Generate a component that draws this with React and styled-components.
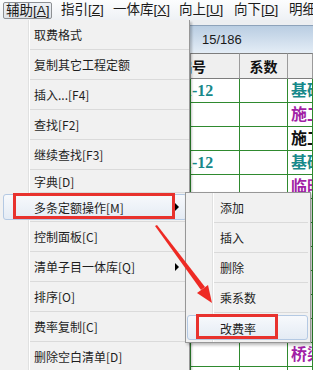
import React from "react";
import styled, { createGlobalStyle, css } from "styled-components";

const GlobalStyle = createGlobalStyle`
  html, body {
    margin: 0;
    padding: 0;
    background: #ffffff;
  }
  body {
    font-family: "Noto Sans CJK SC", "Noto Sans", sans-serif;
  }
`;

const TEAL = "#17898a";
const MAGENTA = "#a21fa6";
const INK = "#111111";
const GRID = "#2f8a2f";

const barItems = [
  { name: "辅助", key: "A", w: 49, open: true },
  { name: "指引", key: "Z", w: 52 },
  { name: "一体库", key: "X", w: 66 },
  { name: "向上", key: "U", w: 55 },
  { name: "向下", key: "D", w: 55 },
  { name: "明细", w: 60 },
];

const mainItems = [
  { label: "取费格式" },
  { label: "复制其它工程定额" },
  { label: "插入...[F4]" },
  { label: "查找[F2]" },
  { label: "继续查找[F3]" },
  { label: "字典[D]", h: 23 },
  { label: "多条定额操作[M]", h: 29, sub: true, active: true, marked: true },
  { label: "控制面板[C]" },
  { label: "清单子目一体库[Q]", sub: true },
  { label: "排序[O]" },
  { label: "费率复制[C]" },
  { label: "删除空白清单[D]" },
];

const subItems = [
  { label: "添加" },
  { label: "插入" },
  { label: "删除" },
  { label: "乘系数" },
  { label: "改费率", active: true, marked: true },
];

const rows = [
  { code: "1-12", codeColor: TEAL, name: "基础垫层", nameColor: TEAL },
  { name: "施工排水", nameColor: MAGENTA },
  { name: "施工降水", nameColor: INK },
  { code: "1-12", codeColor: TEAL, name: "基础", nameColor: TEAL },
  { name: "临时设施", nameColor: MAGENTA },
  {},
  {},
  {},
  {},
  {},
  {},
  { name: "桥梁工程", nameColor: MAGENTA },
  {},
];

const App = () => {
  return (
    <>
      <GlobalStyle />
      <Screen>
        <MenuBar>
          {barItems.map((b) => (
            <BarItem key={b.name} $w={b.w} $open={b.open}>
              {b.name}
              {b.key && (
                <>
                  [<Key>{b.key}</Key>]
                </>
              )}
            </BarItem>
          ))}
        </MenuBar>

        <TopStrip />
        <InfoBar>15/186</InfoBar>

        <Grid>
          <HeadCell />
          <HeadCell $indent={-13}>编号</HeadCell>
          <HeadCell $center>系数</HeadCell>
          <HeadCell />
          {rows.map((r, i) => (
            <React.Fragment key={i}>
              <Cell />
              <Cell $color={r.codeColor} $indent={-7}>
                {r.code}
              </Cell>
              <Cell />
              <Cell $color={r.nameColor} $indent={3}>
                {r.name}
              </Cell>
            </React.Fragment>
          ))}
        </Grid>

        <DropMenu>
          {mainItems.map((it) => (
            <MenuItem key={it.label} $h={it.h} $active={it.active}>
              <ItemText>{it.label}</ItemText>
              {it.sub && <SubArrow />}
              {it.marked && <RedFrame $left={-17} $top={0} $width={162} $height={26} />}
            </MenuItem>
          ))}
        </DropMenu>

        <SubMenu>
          {subItems.map((it) => (
            <SubItem key={it.label} $active={it.active}>
              <ItemText>{it.label}</ItemText>
              {it.marked && <RedFrame $left={-18} $top={1} $width={82} $height={25} />}
            </SubItem>
          ))}
        </SubMenu>

        <Pointer viewBox="0 0 313 370" width="313" height="370">
          <polygon points="155,226 157,225 205,287 201,290" fill="#ee2a24" />
          <polygon points="212,303 197,293 208,285" fill="#ee2a24" />
        </Pointer>
      </Screen>
    </>
  );
};

export default App;

const Screen = styled.div`
  position: relative;
  width: 313px;
  height: 370px;
  overflow: hidden;
  background: #ffffff;
`;

const MenuBar = styled.div`
  display: flex;
  height: 20px;
  background: linear-gradient(#fcfdfe, #eef1f5);
  font-family: "Liberation Sans", "Noto Sans CJK SC", sans-serif;
  font-size: 13.5px;
  line-height: 16px;
  color: #1b1b1b;
  white-space: nowrap;
`;

const BarItem = styled.div`
  display: flex;
  align-items: center;
  flex-shrink: 0;
  box-sizing: border-box;
  width: ${(p) => p.$w}px;
  padding-left: 6px;

  ${(p) =>
    p.$open &&
    css`
      margin: 2px 3px 1px 3px;
      padding-left: 2px;
      border: 1px solid #8d9094;
      border-radius: 2px;
      background: linear-gradient(#eef1f5, #dfe4ea);
    `}
`;

const Key = styled.span`
  text-decoration: underline;
  text-underline-offset: 1px;
`;

const TopStrip = styled.div`
  height: 5px;
  background: #eceef1;
`;

const InfoBar = styled.div`
  height: 28px;
  box-sizing: border-box;
  border-top: 1px solid #8da2ba;
  background: linear-gradient(#b9cde2, #e4edf6);
  display: flex;
  align-items: center;
  padding-left: 202px;
  font-family: "Liberation Sans", Arial, sans-serif;
  font-size: 13px;
  color: #1a1a1a;
`;

const Grid = styled.div`
  display: grid;
  grid-template-columns: 191px 49px 48px 1fr;
`;

const HeadCell = styled.div`
  height: 26px;
  box-sizing: border-box;
  border-top: 1px solid #7d7d7d;
  border-bottom: 1px solid #7d7d7d;
  border-right: 1px solid #9b9b9b;
  background: #efefef;
  line-height: 24px;
  text-align: ${(p) => (p.$center ? "center" : "left")};
  text-indent: ${(p) => p.$indent || 0}px;
  overflow: hidden;
  white-space: nowrap;
  font-weight: bold;
  font-size: 14px;
  color: #111;
`;

const Cell = styled.div`
  height: 24px;
  box-sizing: border-box;
  border-right: 1px solid ${GRID};
  border-bottom: 1px solid ${GRID};
  line-height: 23px;
  text-indent: ${(p) => p.$indent || 0}px;
  overflow: hidden;
  white-space: nowrap;
  font-family: "Liberation Serif", "Noto Sans CJK SC", serif;
  font-weight: bold;
  font-size: 16px;
  color: ${(p) => p.$color || INK};
`;

const gutter = (x) => css`
  background: linear-gradient(
    to right,
    #f1f1f1 ${x}px,
    #e0e1e1 ${x}px,
    #e0e1e1 ${x + 1}px,
    #ffffff ${x + 1}px,
    #ffffff ${x + 2}px,
    #f1f1f1 ${x + 2}px
  );
`;

const DropMenu = styled.div`
  position: absolute;
  top: 20px;
  left: 0;
  width: 190px;
  height: 360px;
  box-sizing: border-box;
  border-right: 1px solid #979797;
  box-shadow: 2px 2px 2px rgba(0, 0, 0, 0.22);
  ${gutter(28)}
`;

const itemBase = css`
  position: relative;
  display: flex;
  align-items: center;
  box-sizing: border-box;
  border-bottom: 1px solid #dadada;
  font-size: 12px;
  color: #1e1e1e;
  white-space: nowrap;
`;

const highlight = css`
  &::before {
    content: "";
    position: absolute;
    left: -27px;
    right: 2px;
    top: 1px;
    bottom: 1px;
    border: 1px solid #b4c9e3;
    border-radius: 3px;
    background: linear-gradient(#f7f9fc, #e4ebf4);
  }
`;

const MenuItem = styled.div`
  ${itemBase}
  height: ${(p) => p.$h || 30}px;
  margin-left: 30px;
  padding-left: 4px;
  ${(p) => p.$active && highlight}
`;

const ItemText = styled.span`
  position: relative;
`;

const SubArrow = styled.span`
  position: absolute;
  right: 10px;
  top: 50%;
  margin-top: -4px;
  width: 0;
  height: 0;
  border-left: 4px solid #000;
  border-top: 4px solid transparent;
  border-bottom: 4px solid transparent;
`;

const RedFrame = styled.span`
  position: absolute;
  left: ${(p) => p.$left}px;
  top: ${(p) => p.$top}px;
  width: ${(p) => p.$width}px;
  height: ${(p) => p.$height}px;
  box-sizing: border-box;
  border: 3px solid #e8322e;
`;

const SubMenu = styled.div`
  position: absolute;
  top: 192px;
  left: 185px;
  width: 126px;
  height: 151px;
  box-sizing: border-box;
  border: 1px solid #979797;
  box-shadow: 2px 2px 3px rgba(0, 0, 0, 0.28);
  ${gutter(26)}
`;

const SubItem = styled.div`
  ${itemBase}
  height: 30px;
  margin-left: 28px;
  margin-right: 2px;
  padding-left: 6px;
  ${(p) =>
    p.$active &&
    css`
      border-bottom: none;
      ${highlight}
      &::before {
        right: 0;
        top: 2px;
        bottom: 3px;
      }
    `}
`;

const Pointer = styled.svg`
  position: absolute;
  left: 0;
  top: 0;
  pointer-events: none;
`;
